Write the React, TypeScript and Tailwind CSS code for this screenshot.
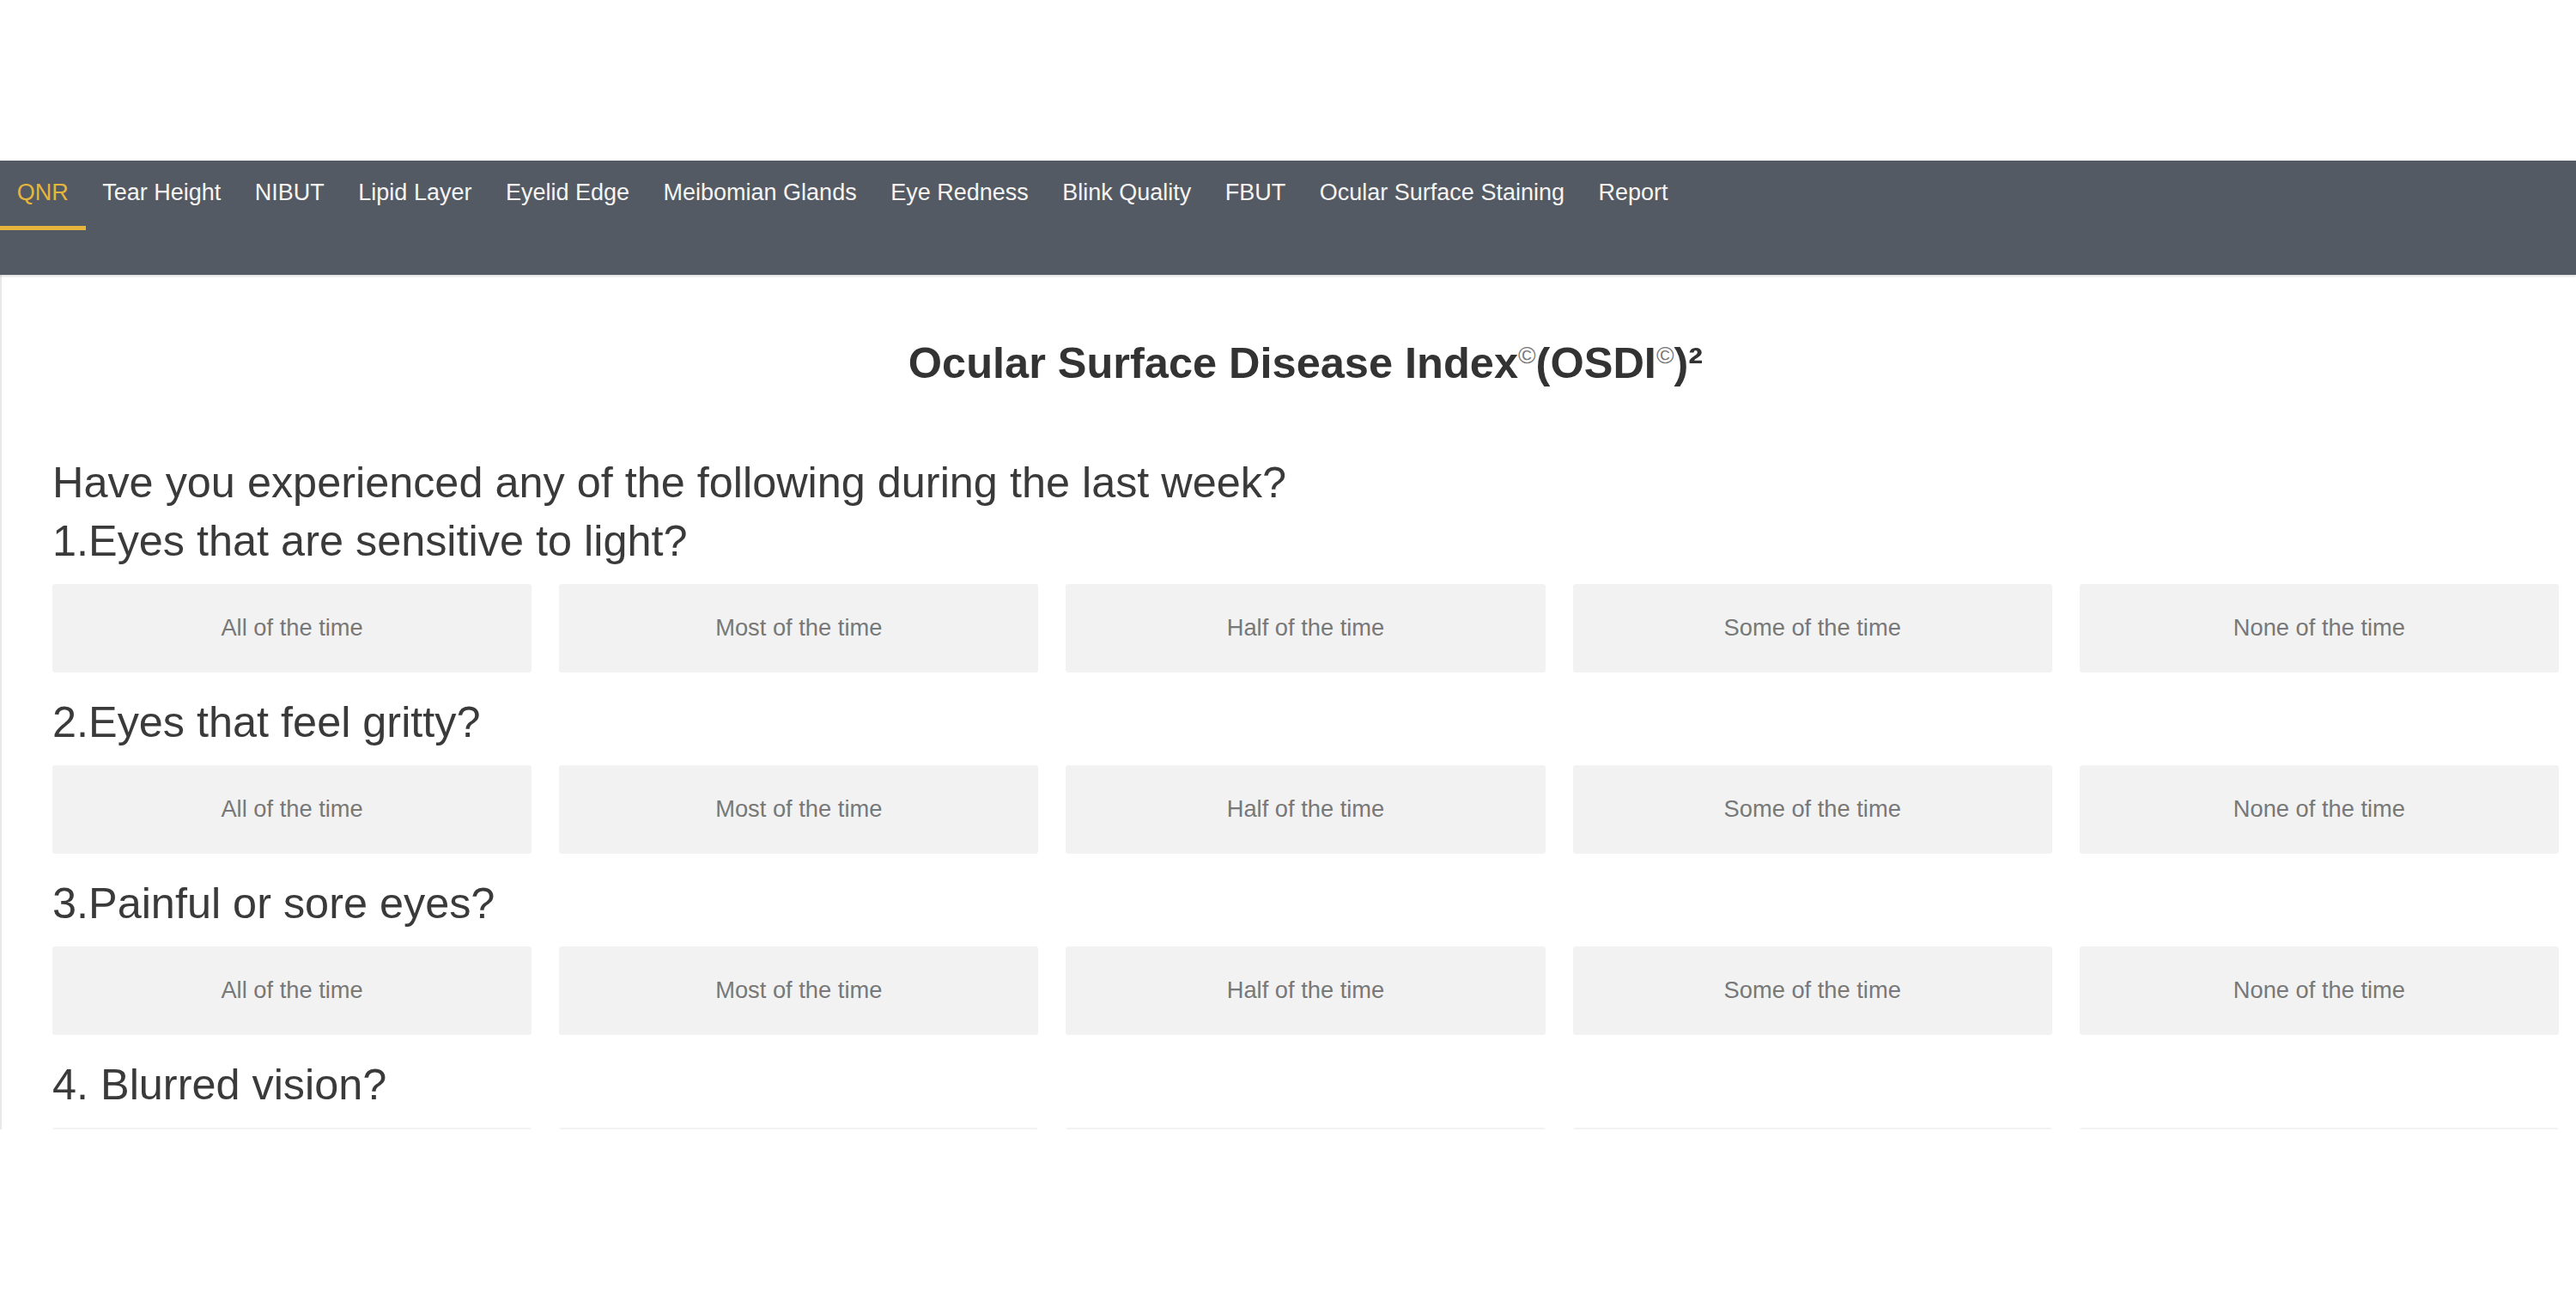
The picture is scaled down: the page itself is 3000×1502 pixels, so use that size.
import React from "react"

const tabs = [
  "QNR",
  "Tear Height",
  "NIBUT",
  "Lipid Layer",
  "Eyelid Edge",
  "Meibomian Glands",
  "Eye Redness",
  "Blink Quality",
  "FBUT",
  "Ocular Surface Staining",
  "Report",
]

const answers = [
  "All of the time",
  "Most of the time",
  "Half of the time",
  "Some of the time",
  "None of the time",
]

const questions = [
  "1.Eyes that are sensitive to light?",
  "2.Eyes that feel gritty?",
  "3.Painful or sore eyes?",
  "4. Blurred vision?",
]

function NavBar() {
  return (
    <div className="h-[133px] bg-[#545a63] shadow-[0_2px_2px_rgba(0,0,0,0.12)] relative z-10">
      <div className="flex">
        {tabs.map((t, i) => (
          <div
            key={t}
            className={
              i === 0
                ? "px-[19.75px] pt-[20px] pb-[22px] leading-[34px] text-[27px] text-[#e5b63b] border-b-[5px] border-[#e5b63b]"
                : "px-[19.75px] pt-[20px] pb-[22px] leading-[34px] text-[27px] text-[#f4f4f4] border-b-[5px] border-transparent"
            }
          >
            {t}
          </div>
        ))}
      </div>
    </div>
  )
}

function Question({ label }: { label: string }) {
  return (
    <div className="mb-[24px]">
      <div className="text-[50.4px] leading-[68px] text-[#3a3a3a] mb-[16px]">{label}</div>
      <div className="grid grid-cols-5 gap-[32px]">
        {answers.map((a) => (
          <button
            key={a}
            className="h-[103px] bg-[#f2f2f2] rounded-[3px] text-[27.3px] text-[#787878] flex items-center justify-center"
          >
            {a}
          </button>
        ))}
      </div>
    </div>
  )
}

export default function App() {
  return (
    <div className="w-[3000px] h-[1502px] bg-white font-['Liberation_Sans',Arial,sans-serif] overflow-hidden">
      <div className="h-[187px]" />
      <NavBar />
      <div className="h-[995px] overflow-hidden border-l-2 border-[#e8e8e8] pl-[59px] pr-[20px] pt-[73px]">
        <h1 className="h-[60px] text-center text-[50.5px] leading-[60px] font-bold text-[#333]">
          Ocular Surface Disease Index
          <span className="text-[28px] leading-[0] font-normal text-[#777] align-[17px]">©</span>
          (OSDI
          <span className="text-[28px] leading-[0] font-normal text-[#777] align-[17px]">©</span>)²
        </h1>
        <div className="mt-[75px] text-[50.4px] leading-[68px] text-[#3a3a3a]">
          Have you experienced any of the following during the last week?
        </div>
        {questions.map((q) => (
          <Question key={q} label={q} />
        ))}
      </div>
    </div>
  )
}
